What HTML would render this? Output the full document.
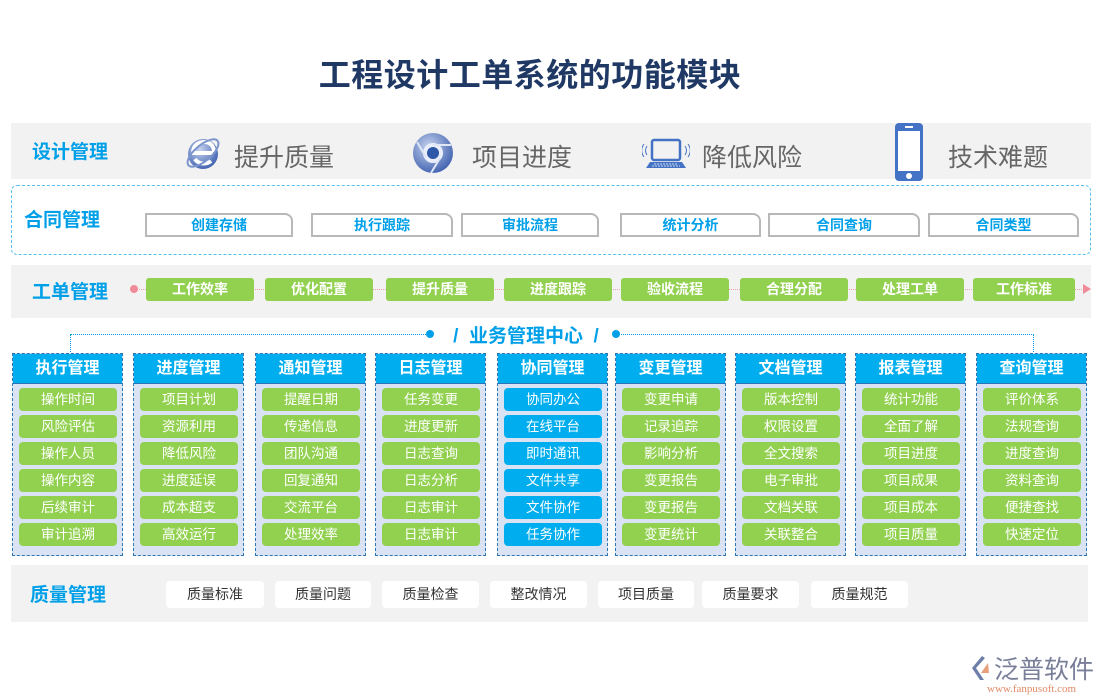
<!DOCTYPE html>
<html><head><meta charset="utf-8"><style>
*{margin:0;padding:0;box-sizing:border-box}
body{width:1100px;height:700px;background:#fff;position:relative;overflow:hidden;font-family:"Liberation Sans","Noto Sans CJK SC",sans-serif}
.a{position:absolute}
.t{white-space:nowrap}
.gray{background:#f2f2f2}
.lbl{color:#00a0e9;font-weight:bold;font-size:19px}
.cbtn{position:absolute;top:213px;height:24px;border:2px solid #b8b8b8;border-top-right-radius:8px;background:#fff;color:#00a0e9;font-weight:bold;font-size:14px;text-align:center;line-height:20px}
.g{position:absolute;top:278px;height:23px;background:#92d050;color:#fff;font-weight:bold;font-size:14px;text-align:center;line-height:23px;border-radius:3px}
.col{position:absolute;top:353px;width:111px;height:203px;background:#dae3f3;border:1px dashed #2e75b6}
.col .h{height:30px;background:#00aeef;color:#fff;font-weight:bold;font-size:16px;text-align:center;line-height:30px;border-bottom:1px solid #2e75b6}
.col .i{margin:4px 5px 0 6px;height:23px;background:#92d050;color:#fff;font-size:13.5px;text-align:center;line-height:23px;border-radius:4px}
.col .i:first-of-type{margin-top:7px}
.col.b .i{background:#00aeef}
.q{position:absolute;top:581px;height:27px;background:#fff;color:#333;font-size:14px;text-align:center;line-height:27px;border-radius:4px}
.big{font-size:25px;color:#666}
</style></head><body>
<div class="a t" style="left:0;width:1060px;top:50px;text-align:center;font-size:32px;letter-spacing:0.5px;font-weight:bold;color:#1f3864">工程设计工单系统的功能模块</div>

<div class="a gray" style="left:11px;top:123px;width:1080px;height:56px"></div>
<div class="a t lbl" style="left:32px;top:137px">设计管理</div>
<svg class="a" style="left:183px;top:133px" width="40" height="40" viewBox="0 0 40 40"><defs><radialGradient id="gb" cx="0.4" cy="0.35" r="0.7"><stop offset="0" stop-color="#c7d4ef"/><stop offset="1" stop-color="#3d5fae"/></radialGradient></defs><circle cx="20" cy="21" r="15" fill="url(#gb)"/><path d="M9 20h21M10 20c0-7 5-11 11-11c6 0 10 4 10 10" stroke="#fff" stroke-width="4" fill="none"/><path d="M12 26c3 5 11 6 16 2" stroke="#fff" stroke-width="4" fill="none"/><ellipse cx="20" cy="20" rx="19" ry="8" transform="rotate(-40 20 20)" stroke="#7c95cc" stroke-width="2" fill="none"/></svg>
<div class="a t big" style="left:234px;top:138px">提升质量</div>
<svg class="a" style="left:412px;top:132px" width="42" height="42" viewBox="0 0 42 42"><circle cx="21" cy="21" r="20" fill="url(#gb)"/><circle cx="21" cy="21" r="8" fill="#2e57a8" stroke="#e8eefb" stroke-width="4"/><path d="M21 13h18M14 25L5 10M28 26l-9 15" stroke="#dfe7f7" stroke-width="2"/></svg>
<div class="a t big" style="left:472px;top:138px">项目进度</div>
<svg class="a" style="left:642px;top:138px" width="48" height="32" viewBox="0 0 48 32"><rect x="10" y="2" width="28" height="20" rx="2" fill="none" stroke="#4472c4" stroke-width="2.5"/><path d="M8 24h32l4 6H4z" fill="#4472c4"/><path d="M12 26h24M10 28h28" stroke="#fff" stroke-width="0.8" stroke-dasharray="2 1"/><path d="M5 8c-2 3-2 6 0 9M2 6c-3 4-3 9 0 13M43 8c2 3 2 6 0 9M46 6c3 4 3 9 0 13" stroke="#4472c4" fill="none" stroke-width="1"/></svg>
<div class="a t big" style="left:702px;top:138px">降低风险</div>
<svg class="a" style="left:895px;top:123px" width="28" height="58" viewBox="0 0 28 58"><rect x="0" y="0" width="28" height="58" rx="4" fill="#4472c4"/><rect x="3" y="8" width="22" height="40" fill="#fff"/><rect x="10" y="3" width="8" height="2" fill="#fff"/><circle cx="14" cy="53" r="3" fill="#fff"/></svg>
<div class="a t big" style="left:948px;top:138px">技术难题</div>

<div class="a" style="left:11px;top:185px;width:1080px;height:70px;border:1px dashed #56c1ef;border-radius:6px"></div>
<div class="a t lbl" style="left:24px;top:205px">合同管理</div>
<div class="cbtn" style="left:145px;width:148px">创建存储</div>
<div class="cbtn" style="left:311px;width:142px">执行跟踪</div>
<div class="cbtn" style="left:461px;width:138px">审批流程</div>
<div class="cbtn" style="left:620px;width:141px">统计分析</div>
<div class="cbtn" style="left:768px;width:152px">合同查询</div>
<div class="cbtn" style="left:928px;width:151px">合同类型</div>

<div class="a gray" style="left:11px;top:265px;width:1080px;height:53px"></div>
<div class="a t lbl" style="left:32px;top:277px">工单管理</div>
<div class="a" style="left:132px;top:289px;width:952px;border-top:1px dotted #f0a0a8"></div>
<div class="a" style="left:130px;top:285px;width:8px;height:8px;border-radius:50%;background:#f08c9a"></div>
<div class="a" style="left:1083px;top:284px;width:0;height:0;border-left:8px solid #f08c9a;border-top:5px solid transparent;border-bottom:5px solid transparent"></div>
<div class="g" style="left:146px;width:108px">工作效率</div>
<div class="g" style="left:265px;width:108px">优化配置</div>
<div class="g" style="left:386px;width:108px">提升质量</div>
<div class="g" style="left:504px;width:108px">进度跟踪</div>
<div class="g" style="left:621px;width:108px">验收流程</div>
<div class="g" style="left:740px;width:108px">合理分配</div>
<div class="g" style="left:856px;width:108px">处理工单</div>
<div class="g" style="left:973px;width:102px">工作标准</div>

<div class="a" style="left:70px;top:334px;width:358px;height:18px;border-top:1px dotted #00a0e9;border-left:1px dotted #00a0e9"></div>
<div class="a" style="left:617px;top:334px;width:417px;height:18px;border-top:1px dotted #00a0e9;border-right:1px dotted #00a0e9"></div>
<div class="a" style="left:426px;top:330px;width:8px;height:8px;border-radius:50%;background:#00a0e9"></div>
<div class="a" style="left:612px;top:330px;width:8px;height:8px;border-radius:50%;background:#00a0e9"></div>
<div class="a t" style="left:438px;top:321px;width:176px;text-align:center;color:#00a0e9;font-size:19px;font-weight:bold">/&nbsp; 业务管理中心 &nbsp;/</div>

<div class="col" style="left:12px"><div class="h">执行管理</div><div class="i">操作时间</div><div class="i">风险评估</div><div class="i">操作人员</div><div class="i">操作内容</div><div class="i">后续审计</div><div class="i">审计追溯</div></div>
<div class="col" style="left:133px"><div class="h">进度管理</div><div class="i">项目计划</div><div class="i">资源利用</div><div class="i">降低风险</div><div class="i">进度延误</div><div class="i">成本超支</div><div class="i">高效运行</div></div>
<div class="col" style="left:255px"><div class="h">通知管理</div><div class="i">提醒日期</div><div class="i">传递信息</div><div class="i">团队沟通</div><div class="i">回复通知</div><div class="i">交流平台</div><div class="i">处理效率</div></div>
<div class="col" style="left:375px"><div class="h">日志管理</div><div class="i">任务变更</div><div class="i">进度更新</div><div class="i">日志查询</div><div class="i">日志分析</div><div class="i">日志审计</div><div class="i">日志审计</div></div>
<div class="col b" style="left:497px"><div class="h">协同管理</div><div class="i">协同办公</div><div class="i">在线平台</div><div class="i">即时通讯</div><div class="i">文件共享</div><div class="i">文件协作</div><div class="i">任务协作</div></div>
<div class="col" style="left:615px"><div class="h">变更管理</div><div class="i">变更申请</div><div class="i">记录追踪</div><div class="i">影响分析</div><div class="i">变更报告</div><div class="i">变更报告</div><div class="i">变更统计</div></div>
<div class="col" style="left:735px"><div class="h">文档管理</div><div class="i">版本控制</div><div class="i">权限设置</div><div class="i">全文搜索</div><div class="i">电子审批</div><div class="i">文档关联</div><div class="i">关联整合</div></div>
<div class="col" style="left:855px"><div class="h">报表管理</div><div class="i">统计功能</div><div class="i">全面了解</div><div class="i">项目进度</div><div class="i">项目成果</div><div class="i">项目成本</div><div class="i">项目质量</div></div>
<div class="col" style="left:976px"><div class="h">查询管理</div><div class="i">评价体系</div><div class="i">法规查询</div><div class="i">进度查询</div><div class="i">资料查询</div><div class="i">便捷查找</div><div class="i">快速定位</div></div>

<div class="a gray" style="left:11px;top:565px;width:1077px;height:57px"></div>
<div class="a t lbl" style="left:30px;top:580px">质量管理</div>
<div class="q" style="left:166px;width:98px">质量标准</div>
<div class="q" style="left:275px;width:96px">质量问题</div>
<div class="q" style="left:382px;width:97px">质量检查</div>
<div class="q" style="left:490px;width:97px">整改情况</div>
<div class="q" style="left:598px;width:96px">项目质量</div>
<div class="q" style="left:702px;width:97px">质量要求</div>
<div class="q" style="left:811px;width:97px">质量规范</div>

<svg class="a" style="left:970px;top:655px" width="22" height="26" viewBox="0 0 22 26"><path d="M12 1L2 13l8 12h4L6 13 15 3z" fill="#6d7fa8"/><path d="M18 8l-7 10h8z" fill="#e8a07c"/></svg>
<div class="a t" style="left:994px;top:650px;font-size:25px;color:#7a7f99">泛普软件</div>
<div class="a t" style="left:987px;top:683px;font-size:11px;color:#e08a66;font-family:'Liberation Serif',serif">www.fanpusoft.com</div>
</body></html>
